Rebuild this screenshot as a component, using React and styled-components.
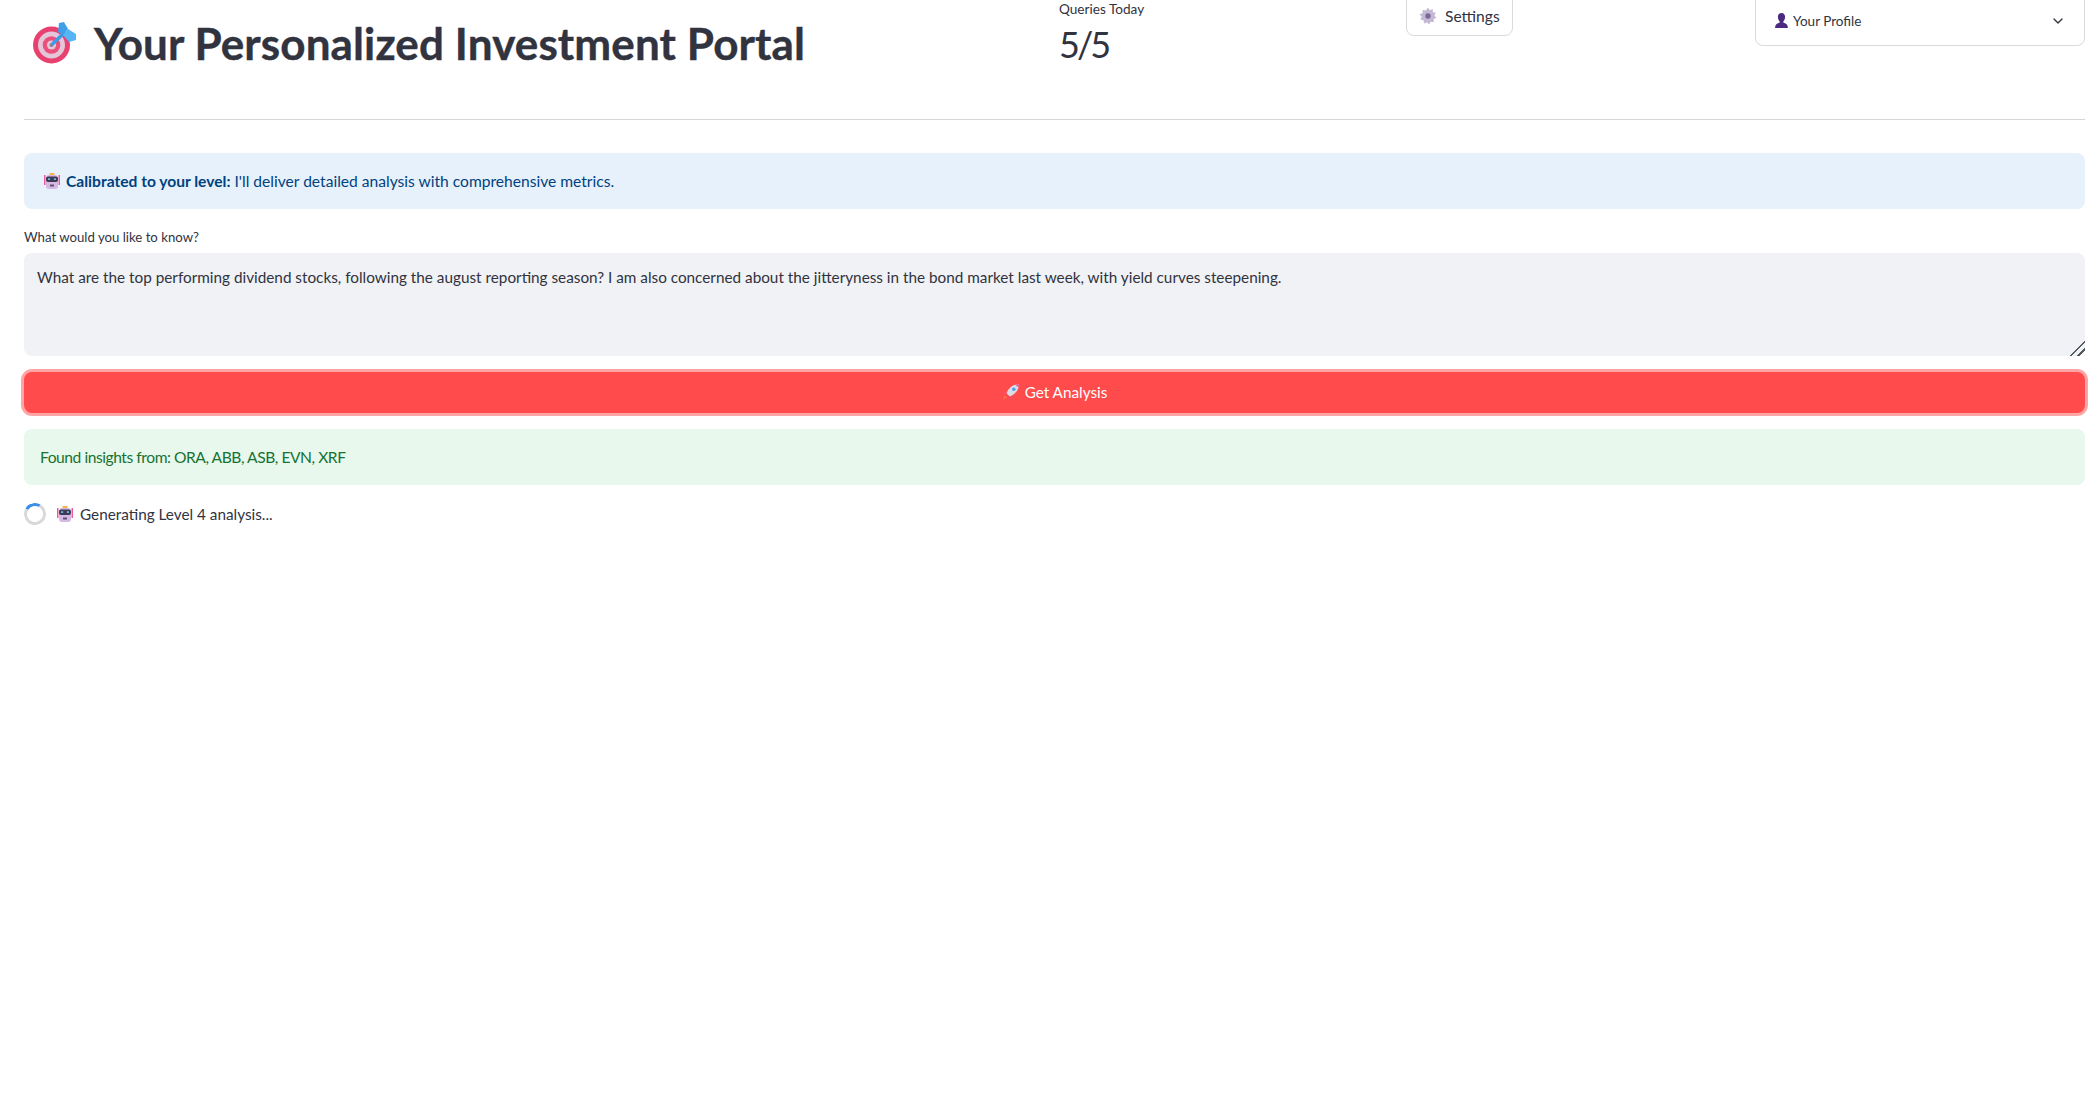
import styled, { createGlobalStyle } from "styled-components";
import { ChevronDown } from "lucide-react";

const GlobalStyle = createGlobalStyle`
  html, body {
    margin: 0;
    background: #ffffff;
    overflow: hidden;
  }
  body {
    font-family: "Lato", "Noto Sans", sans-serif;
    color: #31333f;
  }
`;

const Page = styled.main`
  padding: 0 7px 0 24px;
  height: 1118px;
  box-sizing: border-box;
`;

const Header = styled.header`
  display: grid;
  grid-template-columns: 1fr 329px 329px 330px;
  column-gap: 20px;
  height: 119px;
  border-bottom: 1px solid #d6d6d8;
  box-sizing: content-box;
  margin-bottom: 33px;
`;

const Title = styled.h1`
  display: flex;
  align-items: center;
  gap: 16px;
  margin: 19px 0 0 6px;
  height: 48px;
  font-size: 44px;
  font-weight: 700;
  line-height: 48px;
  letter-spacing: 0.12px;
  -webkit-text-stroke: 0.4px #31333f;
  white-space: nowrap;
  color: #31333f;
`;

const Metric = styled.div`
  display: flex;
  flex-direction: column;
  padding-left: 2px;
`;

const MetricLabel = styled.span`
  font-size: 13.6px;
  line-height: 18px;
`;

const MetricValue = styled.span`
  font-size: 36px;
  line-height: 54px;
  letter-spacing: -3px;
  margin-top: -1px;
`;

const SettingsButton = styled.button`
  display: inline-flex;
  align-items: center;
  gap: 8px;
  align-self: start;
  justify-self: start;
  height: 48px;
  margin-top: -12px;
  padding: 8px 12px 0 12px;
  background: #ffffff;
  border: 1px solid #d9dade;
  border-radius: 8px;
  font: inherit;
  font-size: 15.6px;
  color: #31333f;
`;

const ProfileSelect = styled.div`
  display: flex;
  align-items: center;
  justify-content: space-between;
  align-self: start;
  height: 56px;
  margin-top: -10px;
  padding: 5px 18px 0 18px;
  box-sizing: border-box;
  border: 1px solid #d9dade;
  border-radius: 8px;
  font-size: 13.5px;
`;

const ProfileName = styled.span`
  display: inline-flex;
  align-items: center;
  gap: 4px;
`;

const Alert = styled.div`
  display: flex;
  align-items: center;
  gap: 5px;
  height: 56px;
  box-sizing: border-box;
  padding: 0 ${(p) => (p.$kind === "info" ? "19px" : "16px")};
  border-radius: 8px;
  font-size: 15.6px;
  letter-spacing: ${(p) => (p.$kind === "info" ? "0" : "-0.45px")};
  background: ${(p) => (p.$kind === "info" ? "#e7f1fb" : "#e8f8ed")};
  color: ${(p) => (p.$kind === "info" ? "#004280" : "#177233")};
`;

const FieldLabel = styled.label`
  display: block;
  margin-top: 18px;
  font-size: 13.2px;
  line-height: 20px;
`;

const QuestionInput = styled.textarea`
  display: block;
  width: 100%;
  height: 103px;
  margin-top: 6px;
  padding: 12px 13px;
  box-sizing: border-box;
  border: none;
  outline: none;
  border-radius: 8px;
  background: #f0f2f6;
  font: inherit;
  font-size: 15.3px;
  line-height: 24px;
  color: #31333f;

  &::-webkit-resizer {
    background: linear-gradient(
      135deg,
      transparent 48%,
      #555860 48% 56%,
      transparent 56% 72%,
      #555860 72% 80%,
      transparent 80%
    );
  }
`;

const AnalysisButton = styled.button`
  display: flex;
  align-items: center;
  justify-content: center;
  gap: 5px;
  width: 100%;
  height: 41px;
  margin: 16px 0 16px;
  padding: 0 0 1px;
  background: #ff4b4b;
  border: none;
  border-radius: 8px;
  box-shadow: 0 0 0 3px rgba(255, 75, 75, 0.5);
  font: inherit;
  font-size: 15.3px;
  color: #ffffff;
`;

const StatusRow = styled.div`
  display: flex;
  align-items: center;
  gap: 10px;
  margin-top: 18px;
  font-size: 15.3px;
`;

const Spinner = styled.span`
  width: 22px;
  height: 22px;
  box-sizing: border-box;
  border-radius: 50%;
  border: 3px solid #d9d9db;
  border-top-color: #3b8fe8;
  transform: rotate(-15deg);
`;

const StatusText = styled.span`
  display: inline-flex;
  align-items: center;
  gap: 6px;
  margin-top: -1px;
`;

const TargetIcon = () => (
  <svg width="48" height="48" viewBox="0 0 48 48" aria-hidden="true">
    <circle cx="21.5" cy="26" r="18.5" fill="#e8406f" />
    <circle cx="21.5" cy="26" r="13.5" fill="#e3c6d8" />
    <circle cx="21.5" cy="26" r="8.8" fill="#ec4f7c" />
    <circle cx="21.5" cy="26" r="4.6" fill="#e3c6d8" />
    <circle cx="21.5" cy="26" r="2" fill="#8a7f8a" />
    <path d="M23 24.5 L34 14" stroke="#3a9be8" strokeWidth="3.5" strokeLinecap="round" />
    <path d="M28 13 L29 4 L34 3 L38 10 L33 16 Z" fill="#3f9fe8" />
    <path d="M33 16 L38 10 L46 15 L46 21 L39 23 Z" fill="#55b4f4" />
  </svg>
);

const RobotIcon = ({ size = 18 }) => (
  <svg width={size} height={size} viewBox="0 0 18 18" aria-hidden="true">
    <rect x="1" y="3" width="1.5" height="10" fill="#ef5a9a" />
    <rect x="15.5" y="3" width="1.5" height="10" fill="#ef5a9a" />
    <rect x="6.5" y="1" width="5" height="2.2" fill="#f2b84b" />
    <rect x="3" y="3" width="12" height="14" rx="3" fill="#d5b8e4" />
    <rect x="3" y="4.5" width="12" height="5.5" rx="2" fill="#3b3a52" />
    <rect x="5" y="6.3" width="2.2" height="1.6" fill="#6cc0f2" />
    <rect x="10.8" y="6.3" width="2.2" height="1.6" fill="#6cc0f2" />
    <rect x="7" y="12.5" width="4" height="2" fill="#5c5472" />
  </svg>
);

const RocketIcon = () => (
  <svg width="18" height="18" viewBox="0 0 16 16" aria-hidden="true">
    <path d="M15 1 C10 1 6 4 4 9 L7 12 C12 10 15 6 15 1 Z" fill="#dcdce4" />
    <circle cx="10.5" cy="5.5" r="1.6" fill="#4da3e8" />
    <path d="M15 1 C14 1 13 1.2 12 1.5 L14.5 4 C14.8 3 15 2 15 1 Z" fill="#ee4f93" />
    <path d="M4 9 L1 10 L3 7 Z M7 12 L6 15 L9 13 Z" fill="#ee4f93" />
    <path d="M4 12 L1 15 L2 12 Z" fill="#f2913d" />
  </svg>
);

const GearIcon = () => (
  <svg width="18" height="18" viewBox="0 0 16 16" aria-hidden="true">
    <path
      d="M8 0.5 L9.5 2.8 L12.2 1.8 L12.3 4.6 L15 5.2 L13.6 7.6 L15.5 9.6 L13 10.7 L13.2 13.5 L10.4 13 L9 15.5 L7 13.5 L4.6 14.6 L4 11.8 L1.2 11.2 L2.4 8.6 L0.5 6.5 L3.2 5.5 L3.2 2.6 L6 3 Z"
      fill="#c4b8d4"
    />
    <circle cx="8" cy="8" r="2.4" fill="#7a6a9a" />
  </svg>
);

const PersonIcon = () => (
  <svg width="15" height="17" viewBox="0 0 14 16" aria-hidden="true">
    <path
      d="M7 1 C9.2 1 10.4 2.6 10.4 4.8 C10.4 6.6 9.6 8 8.8 8.8 L8.8 10 C11 10.6 13 11.4 13 15 L1 15 C1 11.4 3 10.6 5.2 10 L5.2 8.8 C4.4 8 3.6 6.6 3.6 4.8 C3.6 2.6 4.8 1 7 1 Z"
      fill="#4b2a80"
    />
  </svg>
);

const App = () => {
  return (
    <>
      <GlobalStyle />
      <Page>
        <Header>
          <Title>
            <TargetIcon />
            Your Personalized Investment Portal
          </Title>
          <Metric>
            <MetricLabel>Queries Today</MetricLabel>
            <MetricValue>5/5</MetricValue>
          </Metric>
          <div>
            <SettingsButton>
              <GearIcon />
              Settings
            </SettingsButton>
          </div>
          <ProfileSelect>
            <ProfileName>
              <PersonIcon />
              Your Profile
            </ProfileName>
            <ChevronDown size={16} strokeWidth={2} color="#31333f" />
          </ProfileSelect>
        </Header>

        <Alert $kind="info">
          <RobotIcon />
          <span>
            <strong>Calibrated to your level:</strong> I'll deliver detailed analysis with comprehensive metrics.
          </span>
        </Alert>

        <FieldLabel>What would you like to know?</FieldLabel>
        <QuestionInput
          readOnly
          value="What are the top performing dividend stocks, following the august reporting season? I am also concerned about the jitteryness in the bond market last week, with yield curves steepening."
        />

        <AnalysisButton>
          <RocketIcon />
          Get Analysis
        </AnalysisButton>

        <Alert $kind="success">Found insights from: ORA, ABB, ASB, EVN, XRF</Alert>

        <StatusRow>
          <Spinner />
          <StatusText>
            <RobotIcon />
            Generating Level 4 analysis...
          </StatusText>
        </StatusRow>
      </Page>
    </>
  );
};

export default App;
